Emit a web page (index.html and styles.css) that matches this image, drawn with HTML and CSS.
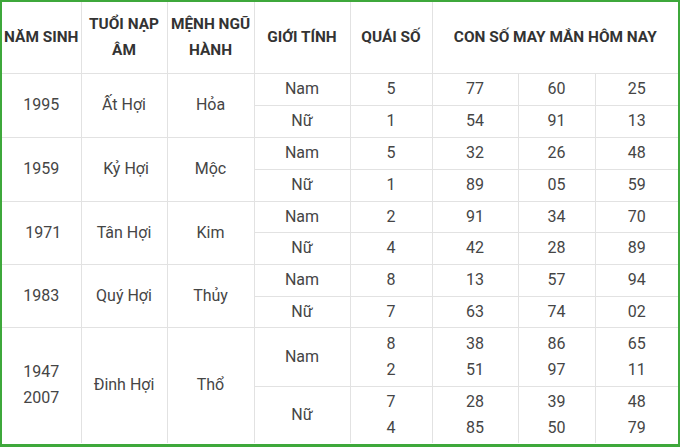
FILE: index.html
```html
<!DOCTYPE html>
<html lang="vi">
<head>
<meta charset="utf-8">
<title>Con số may mắn</title>
<link rel="stylesheet" href="styles.css">
</head>
<body>
<div class="frame">
<table class="lucky">
<colgroup>
<col class="c1"><col class="c2"><col class="c3"><col class="c4"><col class="c5"><col class="c6"><col class="c7"><col class="c8">
</colgroup>
<thead>
<tr class="head">
<th>NĂM SINH</th>
<th>TUỔI NẠP ÂM</th>
<th>MỆNH NGŨ HÀNH</th>
<th>GIỚI TÍNH</th>
<th>QUÁI SỐ</th>
<th colspan="3">CON SỐ MAY MẮN HÔM NAY</th>
</tr>
</thead>
<tbody>
<tr class="r32"><td rowspan="2">1995</td><td rowspan="2">Ất Hợi</td><td rowspan="2">Hỏa</td><td>Nam</td><td>5</td><td>77</td><td>60</td><td>25</td></tr>
<tr class="r32"><td>Nữ</td><td>1</td><td>54</td><td>91</td><td>13</td></tr>
<tr class="r32"><td rowspan="2">1959</td><td rowspan="2">&nbsp;Kỷ Hợi</td><td rowspan="2">Mộc</td><td>Nam</td><td>5</td><td>32</td><td>26</td><td>48</td></tr>
<tr class="r32"><td>Nữ</td><td>1</td><td>89</td><td>05</td><td>59</td></tr>
<tr class="r31"><td rowspan="2">&nbsp;1971</td><td rowspan="2">Tân Hợi</td><td rowspan="2">Kim</td><td>Nam</td><td>2</td><td>91</td><td>34</td><td>70</td></tr>
<tr class="r32"><td>Nữ</td><td>4</td><td>42</td><td>28</td><td>89</td></tr>
<tr class="r32"><td rowspan="2">1983</td><td rowspan="2">Quý Hợi</td><td rowspan="2">Thủy</td><td>Nam</td><td>8</td><td>13</td><td>57</td><td>94</td></tr>
<tr class="r31"><td>Nữ</td><td>7</td><td>63</td><td>74</td><td>02</td></tr>
<tr class="r59"><td rowspan="2">1947<br>2007</td><td rowspan="2">Đinh Hợi</td><td rowspan="2">Thổ</td><td>Nam</td><td>8<br>2</td><td>38<br>51</td><td>86<br>97</td><td>65<br>11</td></tr>
<tr class="r57"><td>Nữ</td><td>7<br>4</td><td>28<br>85</td><td>39<br>50</td><td>48<br>79</td></tr>
</tbody>
</table>
</div>
</body>
</html>
```

FILE: styles.css
```css
html, body {
  margin: 0;
  padding: 0;
  background: #ffffff;
}

.frame {
  width: 680px;
  height: 447px;
  box-sizing: border-box;
  border: 2px solid #3ea83b;
  border-bottom-width: 3px;
  overflow: hidden;
  background: #ffffff;
}

.lucky {
  width: 676px;
  table-layout: fixed;
  border-collapse: collapse;
  border-style: hidden;
  font-family: Roboto, "Liberation Sans", sans-serif;
  font-size: 16px;
  color: #454545;
}

.c1 { width: 79px; }
.c2 { width: 86px; }
.c3 { width: 87px; }
.c4 { width: 96px; }
.c5 { width: 82px; }
.c6 { width: 86px; }
.c7 { width: 77px; }
.c8 { width: 83px; }

.lucky th,
.lucky td {
  border: 1px solid #e2e2e2;
  padding: 0;
  text-align: center;
  vertical-align: middle;
  line-height: 26px;
}

.lucky th {
  font-weight: 700;
  font-size: 15.4px;
  color: #333333;
  padding: 0 1px;
}

.head { height: 71px; }
.r32 { height: 32px; }
.r31 { height: 31px; }
.r59 { height: 59px; }
.r57 { height: 57px; }
```
